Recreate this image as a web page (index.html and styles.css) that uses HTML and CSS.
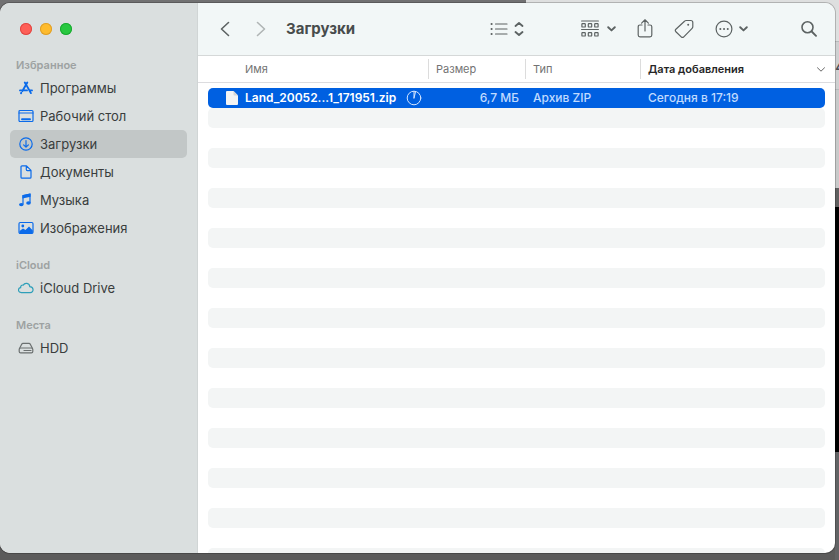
FILE: index.html
```html
<!DOCTYPE html>
<html lang="ru">
<head>
<meta charset="utf-8">
<title>Загрузки</title>
<link rel="stylesheet" href="styles.css">
</head>
<body>
<span class="behind" aria-hidden="true">4</span>
<div class="window">
  <aside class="sidebar">
    <div class="lights">
      <button class="light red" aria-label="Закрыть"></button>
      <button class="light yellow" aria-label="Свернуть"></button>
      <button class="light green" aria-label="Развернуть"></button>
    </div>
    <nav class="group">
      <h2>Избранное</h2>
      <a href="#apps"><svg class="bold" width="16" height="16" viewBox="0 0 16 16"><path d="M9.3 2.6 4.4 11M6.8 2.6l1 1.7M8.7 5.6l4.2 7.5M2 10.4h7M11.800 10.4h2.200M3.300 12.800l-.3.5"/></svg>Программы</a>
      <a href="#desktop"><svg width="16" height="16" viewBox="0 0 16 16"><rect x="1" y="2.5" width="14" height="11" rx="1"/><path d="M1 5h14"/><path class="bold" d="M4 11.2h8"/></svg>Рабочий стол</a>
      <a href="#downloads" class="active" aria-current="page"><svg width="16" height="16" viewBox="0 0 16 16"><circle cx="8" cy="8" r="6.2"/><path d="M8 4.5v6.5M5.600 8.800 8 11.200l2.400-2.400"/></svg>Загрузки</a>
      <a href="#documents"><svg width="16" height="16" viewBox="0 0 16 16"><path d="M4 1.800h4.500l4.500 4.600v6.800q0 1-1 1H4q-1 0-1-1V2.800q0-1 1-1zM8.300 2v3.600q0 1 1 1h3.500"/></svg>Документы</a>
      <a href="#music"><svg width="16" height="16" viewBox="0 0 16 16"><path d="M5 12V3.500l7-1.500v8.500"/><path d="M4.400 3.200 12.600 1.400v3.400L4.400 6.500z" class="fill"/><ellipse cx="3.300" cy="12.600" rx="2.300" ry="1.700" class="fill"/><ellipse cx="10.500" cy="11" rx="2.300" ry="1.700" class="fill"/></svg>Музыка</a>
      <a href="#pictures"><svg width="16" height="16" viewBox="0 0 16 16"><rect x="1" y="2.500" width="14" height="11" rx="1.200"/><path d="M1.500 11 5 8.500l2.500 1.500 3.500-3.600 3.800 4v3H1.500z" class="fill"/><circle cx="4.800" cy="6" r="1.400" class="fill"/></svg>Изображения</a>
    </nav>
    <nav class="group">
      <h2>iCloud</h2>
      <a href="#icloud"><svg class="teal" width="16" height="16" viewBox="0 0 16 16"><path d="M3.400 12.600C-.5 12.400-.3 8 2.700 7.700 2.300 5.600 4.200 4.600 5.200 5.200c1.500-3 6.200-2.400 6.600 1.400 4 .1 4.500 5.800.4 6z"/></svg>iCloud Drive</a>
    </nav>
    <nav class="group">
      <h2>Места</h2>
      <a href="#hdd"><svg class="gray" width="16" height="16" viewBox="0 0 16 16"><path d="M1.500 8.500 3.700 4.200q.4-.8 1.300-.8h6q.9 0 1.300.8l2.200 4.300"/><rect x="1.200" y="8" width="13.600" height="4.800" rx="1.400"/><path d="M6 10.500h7" stroke-dasharray="1 .5"/></svg>HDD</a>
    </nav>
  </aside>
  <main class="content">
    <header class="toolbar">
      <button aria-label="Назад"><svg class="medium" width="10" height="16" viewBox="0 0 10 16"><path d="M8.500 1.500 1.500 8l7 6.500"/></svg></button>
      <button class="forward" aria-label="Вперед" disabled><svg class="medium" width="10" height="16" viewBox="0 0 10 16"><path d="M1.500 1.500l7 6.500-7 6.500"/></svg></button>
      <h1>Загрузки</h1>
      <div class="tools">
        <button class="view" aria-label="Вид"><svg width="18" height="16" viewBox="0 0 18 16"><path d="M5.500 3H17M5.500 8H17M5.500 13H17"/><path class="bold" d="M1.500 3h.2M1.500 8h.2M1.500 13h.2"/></svg><svg class="bold" width="10" height="16" viewBox="0 0 10 16"><path d="M1.500 5 5 2l3.500 3M1.500 11 5 14l3.500-3"/></svg></button>
        <button class="arrange" aria-label="Группировать"><svg width="18" height="18" viewBox="0 0 18 18"><path d="M.6 1h16.800M.6 9.500h16.800"/><rect x=".9" y="3.600" width="3.400" height="3.400" rx=".6"/><rect x="7.300" y="3.600" width="3.400" height="3.400" rx=".6"/><rect x="13.700" y="3.600" width="3.400" height="3.400" rx=".6"/><rect x=".9" y="12.600" width="3.400" height="3.400" rx=".6"/><rect x="7.300" y="12.600" width="3.400" height="3.400" rx=".6"/><rect x="13.700" y="12.600" width="3.400" height="3.400" rx=".6"/></svg><svg class="bold" width="9" height="6" viewBox="0 0 9 6"><path d="M1.200 1.200l3.300 3.200 3.300-3.200"/></svg></button>
        <button aria-label="Поделиться"><svg width="16" height="20" viewBox="0 0 16 20"><path d="M5 6H3Q1.200 6 1.200 7.800v8.200q0 1.800 1.800 1.800h10q1.800 0 1.800-1.800V7.800Q14.800 6 13 6h-2M8 12V.9M4.600 4.100 8 .8l3.400 3.300"/></svg></button>
        <button aria-label="Теги"><svg width="20" height="20" viewBox="0 0 20 20"><path d="M12.200 1.500h4.600q2 0 2 2v4.200q0 .9-.7 1.600l-8.300 8.500q-1.300 1.300-2.600 0L1.900 12.700q-1.200-1.200 0-2.500l8.600-8q.7-.7 1.700-.7z"/><circle cx="14.200" cy="5.800" r="1" class="fill"/></svg></button>
        <button aria-label="Действия"><svg width="18" height="18" viewBox="0 0 18 18"><circle cx="9" cy="9" r="7.900"/><path class="bold" d="M5.300 9h.1M9 9h.1M12.700 9h.1"/></svg><svg class="bold" width="9" height="6" viewBox="0 0 9 6"><path d="M1.200 1.200l3.300 3.200 3.300-3.200"/></svg></button>
        <button class="search" aria-label="Поиск"><svg width="16" height="16" viewBox="0 0 16 16"><circle class="medium" cx="6.500" cy="6.300" r="5.500"/><path class="bold" d="M10.700 10.500l4.300 4.300"/></svg></button>
      </div>
    </header>
    <div class="listing">
      <table>
        <colgroup><col class="c-name"><col class="c-size"><col class="c-type"><col></colgroup>
        <thead>
          <tr><th class="name">Имя</th><th>Размер</th><th>Тип</th><th class="sorted">Дата добавления<svg width="8" height="5" viewBox="0 0 8 5"><path d="M.5.8 4 4.200 7.500.8"/></svg></th></tr>
        </thead>
        <tbody>
          <tr class="selected">
            <td><div class="file"><svg width="12" height="14" viewBox="0 0 12 14"><path class="sheet" d="M1 0h6.500L12 4.500V13q0 1-1 1H1q-1 0-1-1V1q0-1 1-1z"/><path class="fold" d="M7.500 0 12 4.500H8.500q-1 0-1-1z"/></svg><span>Land_20052...1_171951.zip</span><svg class="progress" width="16" height="16" viewBox="0 0 16 16"><circle cx="8" cy="8" r="6.800"/><path d="M8 8V1.500M8 8l1.500-6"/></svg></div></td>
            <td class="size">6,7 МБ</td><td>Архив ZIP</td><td>Сегодня в 17:19</td>
          </tr>
          <tr><td colspan="4"></td></tr><tr><td colspan="4"></td></tr>
          <tr><td colspan="4"></td></tr><tr><td colspan="4"></td></tr>
          <tr><td colspan="4"></td></tr><tr><td colspan="4"></td></tr>
          <tr><td colspan="4"></td></tr><tr><td colspan="4"></td></tr>
          <tr><td colspan="4"></td></tr><tr><td colspan="4"></td></tr>
          <tr><td colspan="4"></td></tr><tr><td colspan="4"></td></tr>
          <tr><td colspan="4"></td></tr><tr><td colspan="4"></td></tr>
          <tr><td colspan="4"></td></tr><tr><td colspan="4"></td></tr>
          <tr><td colspan="4"></td></tr><tr><td colspan="4"></td></tr>
          <tr><td colspan="4"></td></tr><tr><td colspan="4"></td></tr>
          <tr><td colspan="4"></td></tr><tr><td colspan="4"></td></tr>
          <tr><td colspan="4"></td></tr>
        </tbody>
      </table>
    </div>
  </main>
</div>
</body>
</html>
```
FILE: styles.css
```css
* { box-sizing: border-box; }

body {
  margin: 0;
  height: 100vh;
  padding: 3px 4px 7px 0;
  overflow: hidden;
  font: 13px/16px Inter, "Liberation Sans", sans-serif;
  color: #393d3d;
  background:
    linear-gradient(#dedfdf 0 41px, #b9babc 41px 42px, #cfd0d1 42px 89px, #b9babc 89px 90px, #c9caca 90px 188px, #606060 188px 207px, #000 207px 452px, #626365 452px) right top / 4px 100% no-repeat,
    linear-gradient(90deg, #717172 0 526px, #dedfdf 526px) left top / 100% 20px no-repeat,
    #5b5b5b;
}

/* Text of the window underneath, peeking out past the right edge */
.behind {
  position: absolute;
  top: 59px;
  right: -5px;
  z-index: -1;
  font-weight: 600;
  color: #4a4c55;
}

h1, h2 { margin: 0; }

svg {
  flex: none;
  fill: none;
  stroke: currentColor;
  stroke-width: 1.2;
  stroke-linecap: round;
  stroke-linejoin: round;
}
.medium { stroke-width: 1.6; }
.bold { stroke-width: 1.9; }
svg .fill { fill: currentColor; stroke: none; }

button {
  display: flex;
  align-items: center;
  padding: 0;
  border: 0;
  background: none;
  color: inherit;
}

.window {
  display: flex;
  height: 100%;
  overflow: hidden;
  border-radius: 10px;
  background: #fff;
  box-shadow: 0 0 0 1px #0003;
}

.sidebar {
  flex: none;
  width: 198px;
  padding: 0 10px;
  background: #dadfdf;
  border-right: 1px solid #d0d5d5;
}
.lights { display: flex; align-items: center; gap: 8px; height: 52px; margin-bottom: 1px; padding-left: 10px; }
.light { width: 12px; height: 12px; border-radius: 50%; }
.red { background: #fe5f57; box-shadow: inset 0 0 0 1px #df4744; }
.yellow { background: #febb2d; box-shadow: inset 0 0 0 1px #dd9f2b; }
.green { background: #28c840; box-shadow: inset 0 0 0 1px #1ba932; }

.group { margin-bottom: 14px; }
.group h2 { padding-left: 6px; font-size: 11px; line-height: 18px; font-weight: 600; color: #9da2a2; }
.group a {
  display: flex;
  align-items: center;
  gap: 6px;
  height: 28px;
  padding-left: 8px;
  border-radius: 5px;
  color: inherit;
  text-decoration: none;
}
.group svg { color: #0b6bea; }
.group .teal { color: #2e9fb9; }
.group .gray { color: #6b7070; }
.group .active { background: #c2c7c7; }

.content { flex: 1; min-width: 0; }
.toolbar {
  display: flex;
  align-items: center;
  height: 53px;
  padding: 0 18px 0 22px;
  background: #f2f7f7;
  border-bottom: 1px solid #d5d8d8;
  color: #5d6363;
}
.toolbar h1 { margin-left: 20px; font-size: 15px; line-height: 20px; font-weight: 700; color: #484c4c; }
.forward { margin-left: 26px; color: #b0b5b5; }
.tools { display: flex; align-items: center; gap: 21px; margin-left: auto; }
.tools button { gap: 6px; }
.tools .view { margin-right: 36px; }
.tools .arrange { gap: 8px; }
.tools .search { margin-left: 32px; }

.listing {
  padding: 0 10px;
  background: linear-gradient(#dcdcdf, #dcdcdf) 0 26px / 100% 1px no-repeat;
}
table { width: 100%; table-layout: fixed; border-spacing: 0; }
.c-name { width: 221px; }
.c-size { width: 97px; }
.c-type { width: 115px; }
th {
  height: 32px;
  padding: 0 7px 7px;
  font-size: 11px;
  font-weight: 400;
  text-align: left;
  color: #737373;
  background: linear-gradient(#dcdcdc, #dcdcdc) right 3px / 1px 20px no-repeat;
}
th.name { padding-left: 37px; }
th.sorted { padding-right: 0; font-weight: 600; color: #262626; background: none; }
.sorted svg { float: right; margin-top: 6px; stroke-width: 1; color: #666; }

td { height: 20px; padding: 0 7px; font-size: 12px; white-space: nowrap; }
tr:nth-child(even) td { background: #f3f5f5; border-radius: 5px; }
.selected td { background: #0060e1; color: #c0dbff; font-weight: 500; }
.selected td:first-child { padding-left: 18px; border-radius: 5px 0 0 5px; }
.selected td:last-child { border-radius: 0 5px 5px 0; }
.size { text-align: right; }
.file { display: flex; align-items: center; color: #fff; font-weight: 600; }
.file span { margin: 0 10px 0 7px; }
.file .sheet { fill: #f4f4f4; stroke: none; }
.file .fold { fill: #d6d6d6; stroke: none; }
.progress { stroke-width: 1; color: #d3e5ff; }
```
